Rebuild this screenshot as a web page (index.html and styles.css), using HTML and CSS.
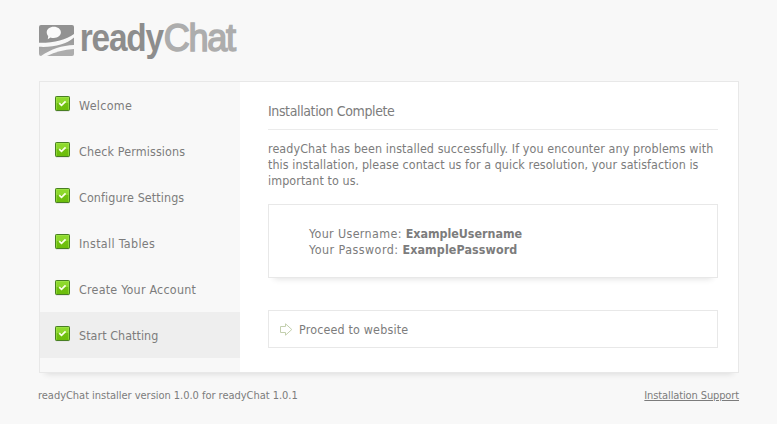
FILE: index.html
```
<!DOCTYPE html>
<html lang="en">
<head>
<meta charset="utf-8">
<title>readyChat installer</title>
<link rel="stylesheet" href="styles.css">
</head>
<body>
<svg class="defs" width="0" height="0" aria-hidden="true">
  <defs>
    <linearGradient id="green" x1="0" y1="0" x2="0" y2="1">
      <stop offset="0" stop-color="#8fdc2c"/><stop offset=".45" stop-color="#8bd52b"/>
      <stop offset=".5" stop-color="#70c010"/><stop offset="1" stop-color="#6bbd0b"/>
    </linearGradient>
    <linearGradient id="gray" x1="0" y1="0" x2="0" y2="1">
      <stop offset="0" stop-color="#989898"/><stop offset="1" stop-color="#adadad"/>
    </linearGradient>
    <symbol id="check" viewBox="0 0 15 16">
      <rect x="1" y="15" width="13" height="1" fill="#e6e6e6"/>
      <rect x=".5" y=".5" width="14" height="14" rx=".8" fill="url(#green)" stroke="#487e23"/>
      <path d="M1.5 13.5V1.5H13.5V13.5" fill="none" stroke="#a4e650" stroke-opacity=".6"/>
      <path d="M4.2 7.2L6.5 9.3L10.6 5.3" fill="none" stroke="#fbffe9" stroke-width="1.8"/>
    </symbol>
  </defs>
</svg>
<div class="page">
  <header class="brand">
    <svg class="mark" width="35" height="32" viewBox="0 0 35 32">
      <path d="M2 0H33Q35 0 35 2V9C27 15 15 18 0 17.8V2Q0 0 2 0Z" fill="#929292"/>
      <path d="M0 21.8C15 22.5 27 19.5 35 12.5V20C23 20.5 12 24 2 31Q0 31 0 29Z" fill="url(#gray)"/>
      <path d="M8 31C16 27 25 24.5 35 24V29Q35 31 33 31Z" fill="#adadad"/>
      <path d="M14.8 1.7C18.8 1.7 21.9 4 21.9 7.3S18.8 13 14.8 13C13.5 13 12.5 12.8 11.5 12.4L8.8 14.2L9.2 11.1C8.2 10.1 7.7 8.8 7.7 7.3C7.7 4 10.8 1.7 14.8 1.7Z" fill="#fafafa"/>
    </svg>
    <svg class="wordmark" width="164" height="46" viewBox="0 0 164 46">
      <text x=".8" y="28" textLength="83" lengthAdjust="spacingAndGlyphs" class="ready">ready</text>
      <text x="84.8" y="28" textLength="71" lengthAdjust="spacingAndGlyphs" class="chat">Chat</text>
    </svg>
  </header>
  <div class="panel">
    <ul class="steps">
      <li><svg class="tick"><use href="#check"/></svg><span class="s1">Welcome</span></li>
      <li><svg class="tick"><use href="#check"/></svg><span class="s2">Check Permissions</span></li>
      <li><svg class="tick"><use href="#check"/></svg><span class="s3">Configure Settings</span></li>
      <li><svg class="tick"><use href="#check"/></svg><span class="s4">Install Tables</span></li>
      <li><svg class="tick"><use href="#check"/></svg><span class="s5">Create Your Account</span></li>
      <li class="current"><svg class="tick"><use href="#check"/></svg><span class="s6">Start Chatting</span></li>
    </ul>
    <main class="content">
      <h1><span>Installation Complete</span></h1>
      <p class="message"><span class="l1">readyChat has been installed successfully. If you encounter any problems with</span><br><span class="l2">this installation, please contact us for a quick resolution, your satisfaction is</span><br><span class="l3">important to us.</span></p>
      <div class="account">
        <div><span class="a1">Your Username: </span><b class="b1">ExampleUsername</b></div>
        <div><span class="a2">Your Password: </span><b class="b2">ExamplePassword</b></div>
      </div>
      <a class="proceed">
        <svg width="13" height="13" viewBox="0 0 13 13"><path d="M.5 3.5H5.5V.8L11.8 6.5L5.5 12.2V9.5H.5Z" fill="#fff" stroke="#c3cfae"/></svg>
        <span class="go">Proceed to website</span>
      </a>
    </main>
  </div>
  <footer><span class="f1">readyChat installer version 1.0.0 for readyChat 1.0.1</span><a class="f2">Installation Support</a></footer>
</div>
</body>
</html>
```

FILE: styles.css
```
* { box-sizing: border-box; }
body {
  margin: 0;
  background: #f8f8f8;
  color: #7c7c7c;
  font: 12.4px/16px "DejaVu Sans Condensed", "DejaVu Sans", sans-serif;
  font-stretch: condensed;
  white-space: nowrap;
}
.defs { position: absolute; }
.page { width: 700px; margin-left: 39px; padding-top: 23px; }
.brand { display: flex; height: 58px; }
.mark { margin-top: 2px; }
.wordmark { margin-left: 5px; overflow: visible; }
.ready, .chat {
  font: 700 38px "Liberation Sans", sans-serif;
  letter-spacing: -1.4px;
}
.ready { fill: #8d8d8d; }
.chat { fill: #adadad; font-weight: 400; stroke: #adadad; stroke-width: 1.5px; }
.panel {
  display: flex;
  height: 292px;
  border: 1px solid #e8e8e8;
  background: #fff;
  box-shadow: 0 7px 6px -6px rgba(0, 0, 0, .12);
}
.steps { width: 200px; margin: 0; padding: 0; list-style: none; background: #f8f8f8; }
.steps li { display: flex; height: 46px; padding: 14px 0 0 15px; }
.steps .current { background: #eee; }
.steps span { margin: 2px 0 0 9px; }
.s1 { letter-spacing: .33px; }
.s2 { letter-spacing: .15px; }
.s3 { letter-spacing: .11px; }
.s4 { letter-spacing: .33px; }
.s5 { letter-spacing: .23px; }
.s6 { letter-spacing: .07px; }
.tick { width: 15px; height: 16px; }
.content { flex: 1; padding: 20px 20px 0 28px; }
h1 {
  margin: 0;
  height: 28px;
  border-bottom: 1px solid #ebebeb;
  font-size: 14px;
  font-weight: 400;
  line-height: 18px;
  letter-spacing: -.38px;
}
.message { margin: 11px 0 15px; }
.l1 { letter-spacing: .1px; }
.l2 { letter-spacing: .075px; }
.l3 { letter-spacing: .09px; }
.account {
  height: 74px;
  padding: 21px 0 0 40px;
  border: 1px solid #e8e8e8;
  background: #fff;
  box-shadow: 0 7px 6px -6px rgba(0, 0, 0, .12);
}
.account span { white-space: pre; }
.a1 { letter-spacing: .36px; }
.a2 { letter-spacing: .47px; }
.b1 { letter-spacing: -.02px; }
.b2 { letter-spacing: .1px; }
.proceed {
  display: flex;
  align-items: center;
  height: 38px;
  margin-top: 32px;
  padding-left: 11px;
  border: 1px solid #e8e8e8;
}
.go { margin: 1px 0 0 6px; letter-spacing: .18px; }
footer {
  display: flex;
  justify-content: space-between;
  margin: 15px 0 0 -1px;
  font-size: 11px;
}
.f1 { letter-spacing: -.03px; }
.f2 { letter-spacing: -.12px; text-decoration: underline; }
```
